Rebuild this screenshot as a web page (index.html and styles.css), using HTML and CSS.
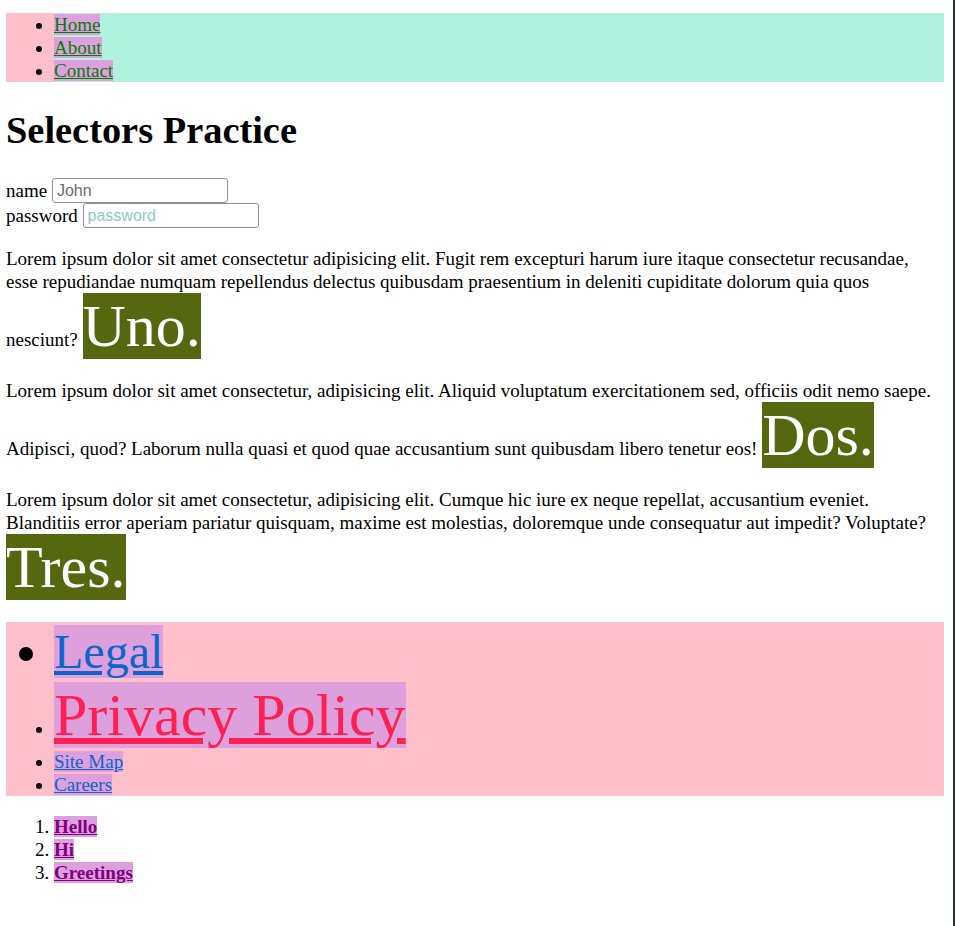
FILE: index.html
```html
<!DOCTYPE html>
<html lang="en">
<head>
<meta charset="utf-8">
<title>Selectors Practice</title>
<link rel="stylesheet" href="styles.css">
</head>
<body>
<ul class="nav">
  <li><a href="#">Home</a></li>
  <li><a href="#">About</a></li>
  <li><a href="#">Contact</a></li>
</ul>
<h1 class="title">Selectors Practice</h1>
<form class="form">
  <label>name <input class="field" type="text" placeholder="John"></label><br>
  <label>password <input class="field field-pass" type="password" placeholder="password"></label>
</form>
<p class="text">Lorem ipsum dolor sit amet consectetur adipisicing elit. Fugit rem excepturi harum iure itaque consectetur recusandae, esse repudiandae numquam repellendus delectus quibusdam praesentium in deleniti cupiditate dolorum quia quos nesciunt? <span class="big">Uno.</span></p>
<p class="text">Lorem ipsum dolor sit amet consectetur, adipisicing elit. Aliquid voluptatum exercitationem sed, officiis odit nemo saepe. Adipisci, quod? Laborum nulla quasi et quod quae accusantium sunt quibusdam libero tenetur eos! <span class="big">Dos.</span></p>
<p class="text">Lorem ipsum dolor sit amet consectetur, adipisicing elit. Cumque hic iure ex neque repellat, accusantium eveniet. Blanditiis error aperiam pariatur quisquam, maxime est molestias, doloremque unde consequatur aut impedit? Voluptate? <span class="big">Tres.</span></p>
<ul class="footer">
  <li class="legal"><a href="#">Legal</a></li>
  <li><a class="privacy" href="#">Privacy Policy</a></li>
  <li><a href="#">Site Map</a></li>
  <li><a href="#">Careers</a></li>
</ul>
<ol class="greet">
  <li><a href="#">Hello</a></li>
  <li><a href="#">Hi</a></li>
  <li><a href="#">Greetings</a></li>
</ol>
</body>
</html>
```
FILE: styles.css
```css
html {
  background: #ffffff;
}
html::after {
  content: "";
  position: fixed;
  top: 0;
  bottom: 0;
  right: 0;
  width: 2px;
  background: #2b3035;
}
body {
  margin: 0 11px 0 6px;
  font-family: "Liberation Serif", "Times New Roman", serif;
  font-size: 19px;
  line-height: 23px;
  color: #000;
}
.nav {
  margin: 13px 0 0;
  padding-left: 48px;
  background: #ffc0cb;
}
.nav li {
  background: #b0f2de;
}
.nav a {
  color: #008000;
  background: #dda0dd;
}
.title {
  font-size: 38.4px;
  line-height: normal;
  margin: 26px 0 26px;
}
.form {
  margin: 0;
  line-height: 25px;
}
.field {
  box-sizing: border-box;
  width: 176px;
  height: 25px;
  padding: 1px 4px;
  font-family: "Liberation Sans", Arial, sans-serif;
  font-size: 16px;
  border: 1px solid #8f8f9d;
  border-radius: 3px;
  vertical-align: top;
}
.field::placeholder {
  color: #6d6d6d;
}
.field-pass::placeholder {
  color: #8ccbc4;
}
.text {
  margin: 19px 0;
}
.big {
  font-size: 60px;
  line-height: 67px;
  color: #ffffff;
  background: #55680f;
}
.footer {
  margin: 21px 0 0;
  padding-left: 48px;
  background: #ffc0cb;
}
.footer a {
  color: #0a66cc;
  background: #dda0dd;
}
.footer .legal {
  font-size: 48px;
  line-height: 59px;
}
.footer .privacy {
  font-size: 60px;
  line-height: normal;
  color: #ff2052;
}
.greet {
  margin: 19px 0 0;
  padding-left: 48px;
}
.greet a {
  color: #800080;
  font-weight: bold;
  background: #dda0dd;
}
```
